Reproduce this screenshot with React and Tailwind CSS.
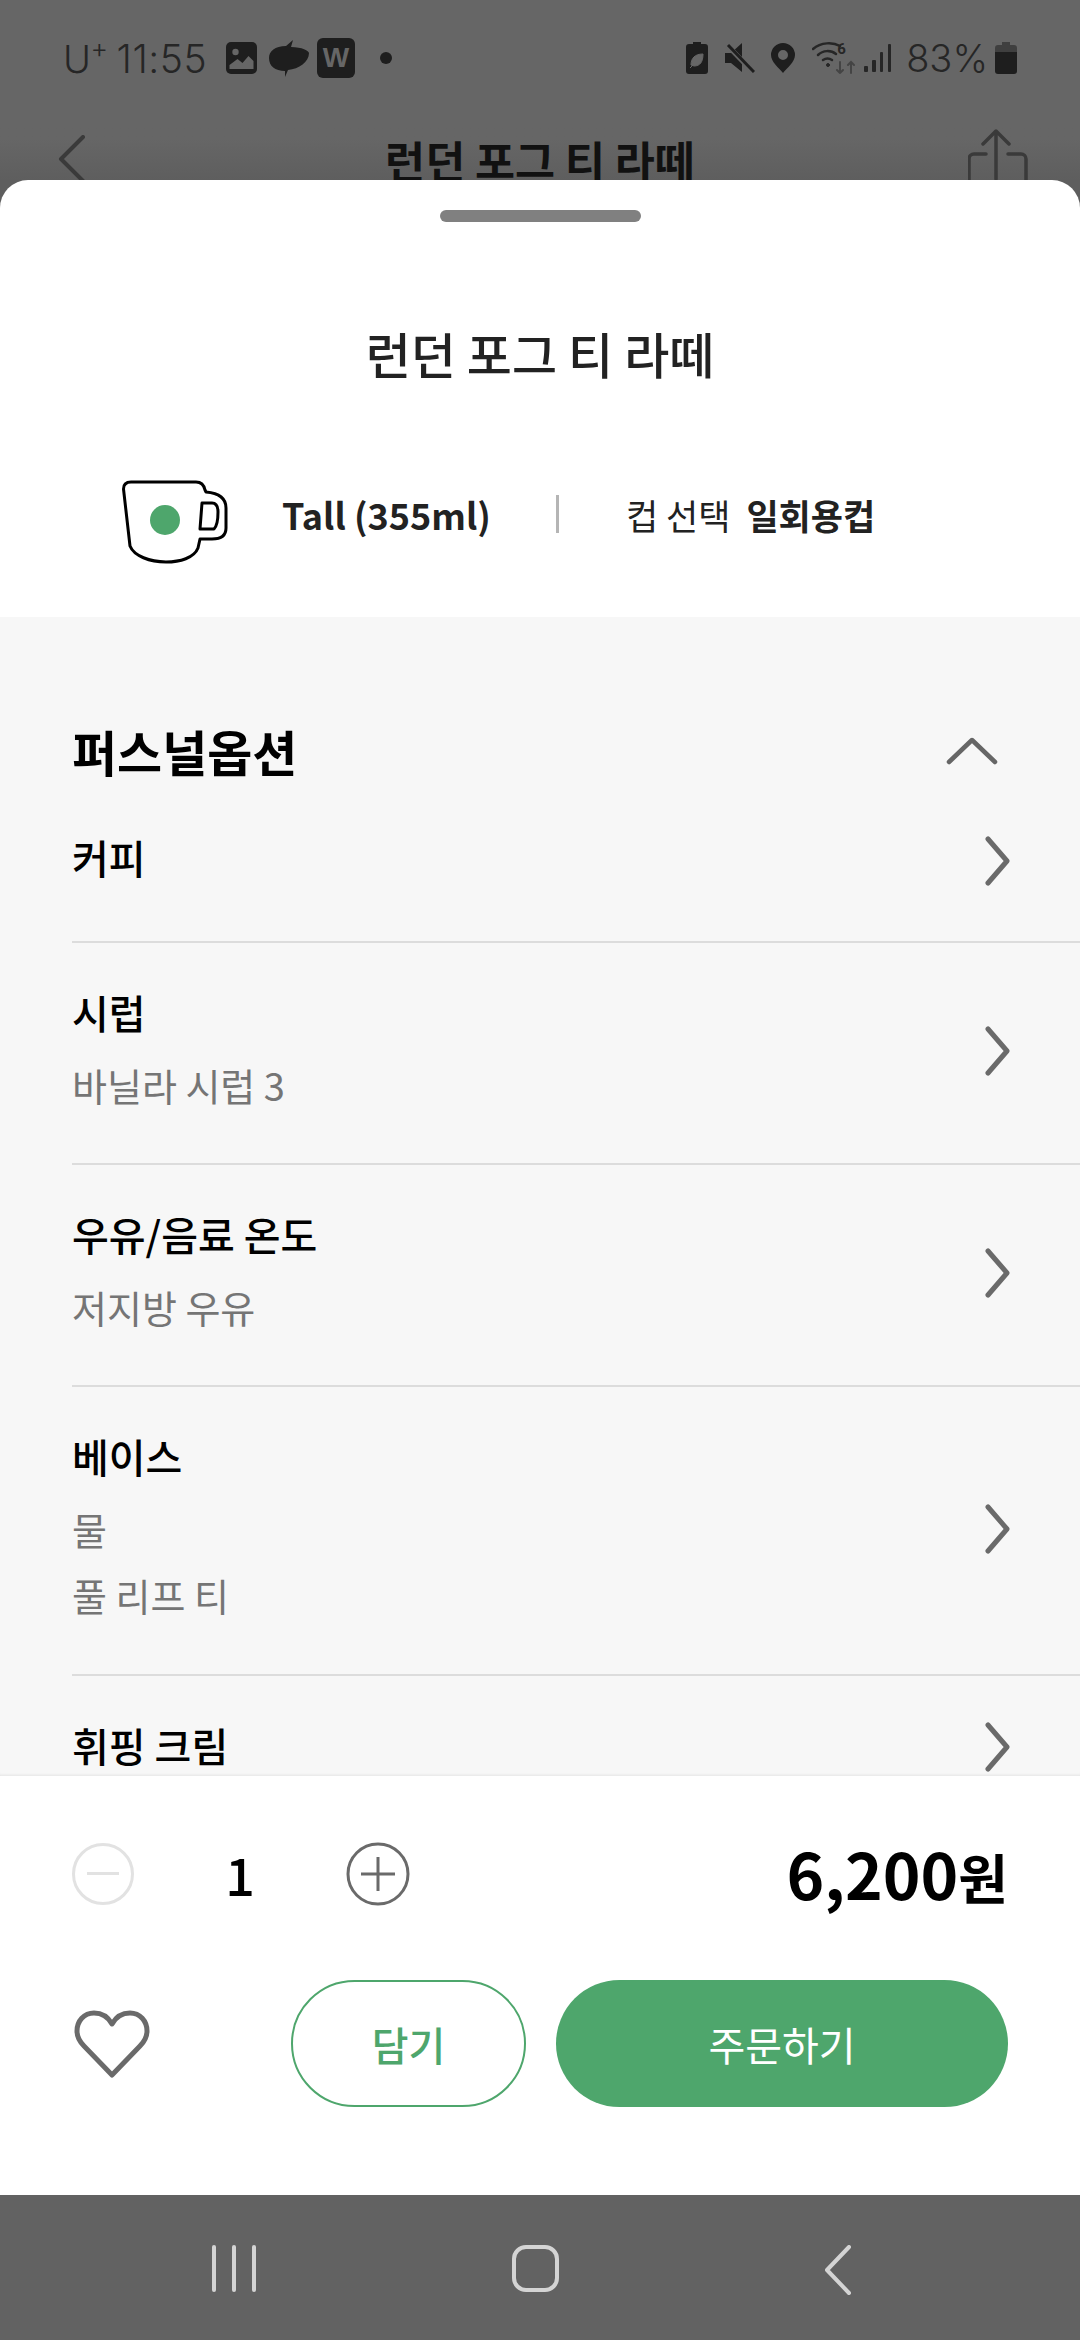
const FONT = 'font-["Noto_Sans_CJK_KR","Noto_Sans",sans-serif]'

const options = [
  { id: 'coffee', title: '커피', lines: [], h: 'h-[158px]', pt: 'pt-[42px]' },
  { id: 'syrup', title: '시럽', lines: ['바닐라 시럽 3'], h: 'h-[222px]', pt: 'pt-[39px]' },
  { id: 'milk', title: '우유/음료 온도', lines: ['저지방 우유'], h: 'h-[222px]', pt: 'pt-[39px]' },
  { id: 'base', title: '베이스', lines: ['물', '풀 리프 티'], h: 'h-[289px]', pt: 'pt-[39px]' },
  { id: 'whip', title: '휘핑 크림', lines: [], h: 'h-[146px]', pt: 'pt-[39px]' },
]

function StatusBar() {
  return (
    <div className="flex h-[112px] items-center justify-between bg-[#666] pl-[63px] pr-[63px] pt-[4px] font-['Inter',sans-serif] font-light text-[#262626]">
      <div className="flex items-center">
        <span className="w-[144px] whitespace-nowrap text-[38px] leading-none tracking-[-0.5px]">
          U<sup className="top-[-0.55em] text-[27px] leading-none">+</sup>
          <span className="ml-[9px] text-[39px] tracking-[0.5px]">11:55</span>
        </span>
        <svg className="ml-[19px]" width="31" height="32" viewBox="0 0 31 32">
          <rect width="31" height="32" rx="5" fill="#1e1e1e" />
          <circle cx="9.500" cy="10" r="3.200" fill="#666" />
          <path d="M3.500 27v-4l8-6 5 4 6-7 5 5v8z" fill="#666" />
        </svg>
        <svg className="ml-[12px]" width="40" height="37" viewBox="0 0 40 37">
          <path d="M0 18C0 11 6 6 17 6L24 0 22 7C33 7 40 11 40 13 40 22 30 29 19 30L16 37 16 31C6 31 0 26 0 18z" fill="#1e1e1e" />
        </svg>
        <div className="ml-[8px] flex h-[40px] w-[38px] items-center justify-center rounded-[6px] bg-[#1e1e1e] font-['Liberation_Sans',sans-serif] text-[28px] font-bold leading-none text-[#666]">
          W
        </div>
        <div className="ml-[25px] size-[12px] rounded-full bg-[#1e1e1e]" />
      </div>
      <div className="flex items-center">
        <svg width="22" height="32" viewBox="0 0 22 32">
          <path d="M7 0h8v2h4a3 3 0 0 1 3 3v24a3 3 0 0 1-3 3H3a3 3 0 0 1-3-3V5a3 3 0 0 1 3-3h4z" fill="#1e1e1e" />
          <path d="M5 23c0-7 4-11 12-11 0 8-3 12-9 12zM4 26l7-7" fill="#666" stroke="#666" strokeWidth="1" />
        </svg>
        <svg className="ml-[17px]" width="30" height="30" viewBox="0 0 30 30">
          <path d="M0 10h6L17 0v19zM0 10v10h6l11 9V19z" fill="#1e1e1e" />
          <path d="M2 2l26 27" stroke="#666" strokeWidth="5" />
          <path d="M3 2l26 27" stroke="#1e1e1e" strokeWidth="3" />
        </svg>
        <svg className="ml-[16px]" width="24" height="30" viewBox="0 0 24 30">
          <path fillRule="evenodd" d="M12 0a12 12 0 0 1 12 12c0 7-8 13-12 18C8 25 0 19 0 12A12 12 0 0 1 12 0zm0 7a5 5 0 1 0 0 10 5 5 0 0 0 0-10z" fill="#1e1e1e" />
        </svg>
        <div className="relative ml-[17px] h-[32px] w-[43px]">
          <svg width="43" height="32" viewBox="0 0 43 32" fill="none" stroke="#262626" strokeLinecap="round">
            <path d="M1 7c8-7 20-7 27-3" strokeWidth="2.500" />
            <path d="M6 13c5-5 13-5 18-1" strokeWidth="2.500" />
            <path d="M11 18c3-2 6-2 9 0" strokeWidth="2.500" />
            <circle cx="16" cy="23" r="1.500" fill="#262626" />
            <path d="M28 20v11m-3-3l3 3 3-3" stroke="#444" strokeWidth="2" />
            <path d="M39 31V20m-3 3l3-3 3 3" stroke="#444" strokeWidth="2" />
          </svg>
          <span className="absolute left-[25px] top-[0px] font-['Roboto',sans-serif] text-[15px] font-bold leading-none">6</span>
        </div>
        <svg className="ml-[9px]" width="27" height="30" viewBox="0 0 27 30" fill="#262626">
          <rect x="0" y="23" width="4" height="6" rx="1" />
          <rect x="8" y="17" width="4" height="12" rx="1" />
          <rect x="16" y="9" width="3" height="20" rx="1" />
          <rect x="24" y="1" width="3" height="28" rx="1" />
        </svg>
        <span className="ml-[15px] text-[38px] leading-none">83%</span>
        <svg className="ml-[7px]" width="22" height="32" viewBox="0 0 22 32">
          <path d="M7 0h8v3h4a3 3 0 0 1 3 3v4H0V6a3 3 0 0 1 3-3h4z" fill="#3f3f3f" />
          <path d="M0 10h22v19a3 3 0 0 1-3 3H3a3 3 0 0 1-3-3z" fill="#1e1e1e" />
        </svg>
      </div>
    </div>
  )
}

function TopBar() {
  return (
    <div className="flex h-[68px] items-start justify-between overflow-hidden bg-linear-to-b from-[#666] from-40% to-[#5e5e5e] pl-[58px] pr-[52px]">
      <svg className="mt-[23px]" width="30" height="60" viewBox="0 0 30 60" fill="none" stroke="#3a3a3a" strokeWidth="4" strokeLinecap="round" strokeLinejoin="round">
        <path d="M25 2L3 24l22 22" />
      </svg>
      <div className={`${FONT} ml-[24px] mt-[18px] text-[43.500px] font-bold leading-[60px] text-[#111]`}>런던 포그 티 라떼</div>
      <svg width="60" height="60" className="mt-[17px]" viewBox="0 0 60 60" fill="none" stroke="#3a3a3a" strokeWidth="3.500" strokeLinecap="round" strokeLinejoin="round">
        <path d="M28 50V3M15 15L28 2l13 13" />
        <path d="M18 25H6a5 5 0 0 0-5 5v30M40 25h13a5 5 0 0 1 5 5v30" />
      </svg>
    </div>
  )
}

function OptionRow({ item, last }) {
  return (
    <div className={`flex shrink-0 items-center justify-between pr-[70px] ${item.h} ${last ? '' : 'border-b-2 border-[#dcdcdc]'}`}>
      <div className={`self-start ${item.pt}`}>
        <div className="text-[40px] font-medium leading-[60px] text-black">{item.title}</div>
        {item.lines.length > 0 && (
          <div className="mt-[10px]">
            {item.lines.map((line) => (
              <div key={line} className="text-[38px] leading-[66px] text-[#757575]">{line}</div>
            ))}
          </div>
        )}
      </div>
      <svg className="mb-[4px]" width="25" height="50" viewBox="0 0 25 50" fill="none" stroke="#6a6a6a" strokeWidth="5" strokeLinecap="round" strokeLinejoin="round">
        <path d="M3 3l19 22-19 22" />
      </svg>
    </div>
  )
}

function Stepper() {
  return (
    <div className="flex items-center">
      <div className="relative size-[62px] rounded-full border-[3px] border-[#e2e2e2]">
        <div className="absolute left-[12px] top-[26px] h-[3px] w-[32px] bg-[#e2e2e2]" />
      </div>
      <div className="w-[212px] text-center text-[52px] font-medium leading-none text-black">1</div>
      <svg width="64" height="64" viewBox="0 0 64 64" fill="none" stroke="#6a6a6a" strokeWidth="3">
        <circle cx="32" cy="32" r="30" />
        <path d="M15 32h34M32 15v34" />
      </svg>
    </div>
  )
}

export default function App() {
  return (
    <div className={`${FONT} flex h-screen w-full flex-col overflow-hidden bg-[#5e5e5e]`}>
      <StatusBar />
      <TopBar />

      <div className="flex min-h-0 flex-1 flex-col overflow-hidden rounded-t-[28px] bg-white">
        {/* Sheet header */}
        <div className="flex h-[437px] shrink-0 flex-col items-center">
          <div className="mt-[30px] h-[12px] w-[201px] rounded-full bg-[#808080]" />
          <h1 className="mt-[98px] text-[49px] font-medium leading-[66px] text-[#222]">런던 포그 티 라떼</h1>
          <div className="mt-[78px] flex h-[100px] w-full items-center pl-[122px]">
            <svg className="mt-[16px]" width="106" height="84" viewBox="0 0 106 84" fill="none" stroke="black" strokeWidth="3" strokeLinejoin="round">
              <path d="M1.500 9C1.500 4 4 2 9 2H74c5 0 8 3 9 8l1 2c12 1 20 6 20 16V48c0 8-6 11-14 11H78l-2 9C72 78 58 82 44 82 28 82 12 76 8 66z" fill="white" />
              <path d="M80 23H90c4 0 6 3 6 9 0 8-1 14-4 17H78z" fill="white" />
              <ellipse cx="43" cy="40" rx="15" ry="15" fill="#4ea66c" stroke="none" />
            </svg>
            <span className="ml-[54px] text-[36px] font-bold leading-none text-[#222]">Tall (355ml)</span>
            <div className="ml-[65px] h-[38px] w-[3px] bg-[#b5b5b5]" />
            <span className="ml-[67px] text-[35px] leading-none text-[#222]">컵 선택</span>
            <span className="ml-[16px] text-[35px] font-bold leading-none text-[#222]">일회용컵</span>
          </div>
        </div>

        {/* Personal options */}
        <div className="flex min-h-0 flex-1 flex-col overflow-hidden bg-[#f7f7f7] pl-[72px] shadow-[inset_0_-3px_3px_-2px_rgba(0,0,0,0.08)]">
          <div className="flex h-[168px] shrink-0 items-center justify-between pr-[82px] pt-[100px]">
            <h2 className="text-[49px] font-bold leading-[68px] text-black">퍼스널옵션</h2>
            <svg width="52" height="30" viewBox="0 0 52 30" fill="none" stroke="#666" strokeWidth="4.500" strokeLinecap="round" strokeLinejoin="round">
              <path d="M3 26L26 4l23 22" />
            </svg>
          </div>
          {options.map((item, i) => (
            <OptionRow key={item.id} item={item} last={i === options.length - 1} />
          ))}
        </div>

        {/* Order bar */}
        <div className="flex h-[419px] shrink-0 flex-col px-[72px]">
          <div className="mt-[53px] flex h-[90px] items-center justify-between">
            <Stepper />
            <div className="whitespace-nowrap text-[64px] font-bold leading-[90px] text-black">
              6,200<span className="text-[54px]">원</span>
            </div>
          </div>
          <div className="mt-[61px] flex items-center">
            <svg className="ml-[2px]" width="76" height="68" viewBox="0 0 76 68" fill="none" stroke="#6a6a6a" strokeWidth="5" strokeLinejoin="round">
              <path d="M38 14C33 5 26 3 20 3 10 3 3 11 3 21c0 7 3 11 7 15l28 29 28-29c4-4 7-8 7-15 0-10-7-18-17-18-6 0-13 2-18 11z" />
            </svg>
            <button className="ml-[141px] h-[127px] w-[235px] rounded-full border-2 border-[#4ea66c] text-[40px] font-medium text-[#4ea66c]">담기</button>
            <button className="ml-[30px] h-[127px] w-[452px] rounded-full bg-[#4ea66c] text-[40px] text-white">주문하기</button>
          </div>
        </div>

        {/* Android nav */}
        <div className="flex h-[145px] shrink-0 items-start bg-[#626262] pt-[50px]">
          <div className="ml-[212px] flex h-[47px] gap-[16px]">
            <div className="h-full w-[4px] rounded-full bg-[#d4d4d4]" />
            <div className="h-full w-[4px] rounded-full bg-[#d4d4d4]" />
            <div className="h-full w-[4px] rounded-full bg-[#d4d4d4]" />
          </div>
          <div className="ml-[256px] h-[47px] w-[47px] rounded-[14px] border-[4px] border-[#d4d4d4]" />
          <svg className="ml-[264px]" width="34" height="50" viewBox="0 0 34 50" fill="none" stroke="#d4d4d4" strokeWidth="4" strokeLinecap="round" strokeLinejoin="round">
            <path d="M26 2L4 25l22 23" />
          </svg>
        </div>
      </div>
    </div>
  )
}
